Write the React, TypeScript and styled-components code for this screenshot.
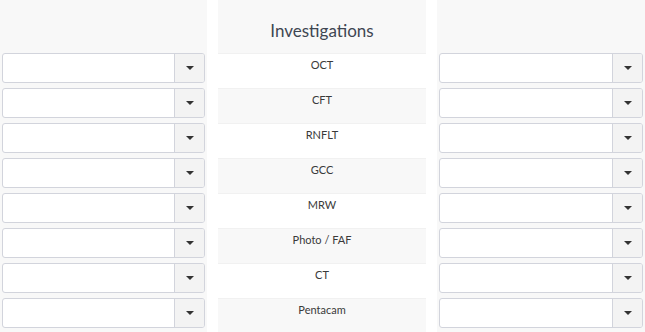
import React from 'react'
import styled, { createGlobalStyle } from 'styled-components'

const GlobalStyle = createGlobalStyle`
  html, body {
    margin: 0;
    padding: 0;
    background: #fff;
  }

  body {
    font-family: Lato, "Open Sans", sans-serif;
    color: #333;
  }
`

const StyledGrid = styled.div`
  display: grid;
  grid-template-columns: 207px 208px 208px;
  column-gap: 11px;
  width: 645px;
  height: 332px;
  overflow: hidden;
`

const StyledSide = styled.div`
  display: flex;
  flex-direction: column;
  gap: 5px;
  padding: 53px 2px 4px;

  background: #f8f8f8;
`

const StyledSelect = styled.div`
  display: flex;
  height: 30px;
  box-sizing: border-box;

  background: #fff;

  border: 1px solid #d2d4dc;
  border-radius: 3px;
  overflow: hidden;
`

const StyledValue = styled.div`
  flex: 1;
`

const StyledToggle = styled.div`
  display: flex;
  align-items: center;
  justify-content: center;
  width: 29px;

  background: #f3f3f3;

  border-left: 1px solid #d2d4dc;

  &::after {
    content: '';
    border-left: 4px solid transparent;
    border-right: 4px solid transparent;
    border-top: 4px solid #333;
  }
`

const StyledMiddle = styled.div`
  display: flex;
  flex-direction: column;
`

const StyledHeader = styled.div`
  display: flex;
  align-items: center;
  justify-content: center;
  height: 53px;
  box-sizing: border-box;
  padding-top: 8px;

  font-size: 17px;
  color: #3e4652;

  background: #f8f8f8;
`

const StyledRow = styled.div<{ $striped: boolean }>`
  height: 35px;
  box-sizing: border-box;
  padding-top: 3px;

  font-size: 11px;
  line-height: 16px;
  color: #3a3a3a;
  text-align: center;

  background: ${({ $striped }) => ($striped ? '#f8f8f8' : '#fff')};
  border-top: 1px solid #f1f1f1;
`

const investigations = ['OCT', 'CFT', 'RNFLT', 'GCC', 'MRW', 'Photo / FAF', 'CT', 'Pentacam']

const Select: React.FC = () => (
  <StyledSelect>
    <StyledValue />
    <StyledToggle />
  </StyledSelect>
)

const Side: React.FC = () => (
  <StyledSide>
    {investigations.map((name) => (
      <Select key={name} />
    ))}
  </StyledSide>
)

const App: React.FC = () => (
  <>
    <GlobalStyle />
    <StyledGrid>
      <Side />
      <StyledMiddle>
        <StyledHeader>Investigations</StyledHeader>
        {investigations.map((name, i) => (
          <StyledRow key={name} $striped={i % 2 === 1}>
            {name}
          </StyledRow>
        ))}
      </StyledMiddle>
      <Side />
    </StyledGrid>
  </>
)

export default App
